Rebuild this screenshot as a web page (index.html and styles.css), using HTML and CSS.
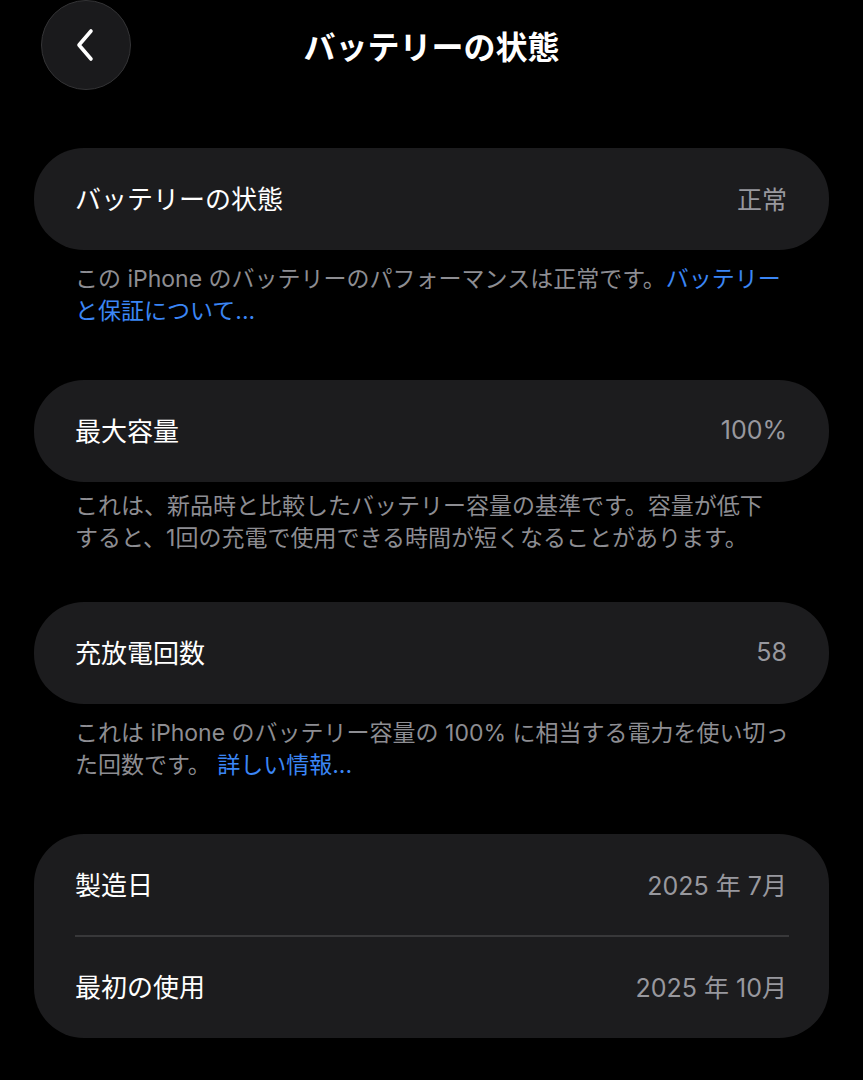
FILE: index.html
```html
<!DOCTYPE html>
<html lang="ja">
<head>
    <meta charset="utf-8">
    <title>バッテリーの状態</title>
    <link rel="stylesheet" href="styles.css">
</head>
<body>
    <header class="topbar">
        <button class="back-btn" aria-label="戻る">
            <svg width="28" height="36" viewBox="0 0 28 36">
                <path d="M19 4 L7 18 L19 32" fill="none" stroke="#fff" stroke-width="3.6" stroke-linecap="round" stroke-linejoin="round"/>
            </svg>
        </button>
        <h1 class="title">バッテリーの状態</h1>
        <span></span>
    </header>

    <section class="group">
        <div class="card">
            <div class="row">
                <span class="label">バッテリーの状態</span>
                <span class="value">正常</span>
            </div>
        </div>
        <p class="note">この iPhone のバッテリーのパフォーマンスは正常です。<a href="#">バッテリー<br>と保証について...</a></p>
    </section>

    <section class="group">
        <div class="card">
            <div class="row">
                <span class="label">最大容量</span>
                <span class="value">100%</span>
            </div>
        </div>
        <p class="note tight">これは、新品時と比較したバッテリー容量の基準です。容量が低下<br>すると、1回の充電で使用できる時間が短くなることがあります。</p>
    </section>

    <section class="group after-tight">
        <div class="card">
            <div class="row">
                <span class="label">充放電回数</span>
                <span class="value">58</span>
            </div>
        </div>
        <p class="note">これは iPhone のバッテリー容量の 100% に相当する電力を使い切っ<br>た回数です。 <a href="#">詳しい情報...</a></p>
    </section>

    <section class="group">
        <div class="card">
            <div class="row">
                <span class="label">製造日</span>
                <span class="value">2025 年 7月</span>
            </div>
            <div class="divider"></div>
            <div class="row">
                <span class="label">最初の使用</span>
                <span class="value">2025 年 10月</span>
            </div>
        </div>
    </section>
</body>
</html>
```

FILE: styles.css
```css
body {
    margin: 0;
    padding: 0 34px;
    background: #000;
    color: #fff;
    font-family: Inter, "Noto Sans CJK JP", sans-serif;
}

.topbar {
    display: grid;
    grid-template-columns: 1fr auto 1fr;
    align-items: center;
    height: 90px;
}

.back-btn {
    width: 90px;
    height: 90px;
    margin-left: 7px;
    border-radius: 50%;
    border: 1px solid #343436;
    background: #1a1a1c;
    display: flex;
    align-items: center;
    justify-content: center;
    padding: 0;
    cursor: pointer;
}

.title {
    margin: 0;
    font-size: 32px;
    font-weight: 700;
}

.group {
    margin-top: 58px;
}

.group + .group {
    margin-top: 53px;
}

.group.after-tight {
    margin-top: 48px;
}

.card {
    background: #1c1c1e;
    border-radius: 50px;
}

.row {
    display: flex;
    justify-content: space-between;
    align-items: center;
    height: 102px;
    padding: 0 42px 0 41px;
}

.label {
    font-size: 26px;
    margin-top: -3px;
}

.value {
    font-size: 25px;
    color: #98989e;
    margin-top: -3px;
}

.divider {
    height: 2px;
    margin: -1px 40px -1px 41px;
    background: #38383a;
}

.note {
    margin: 13px 0 0;
    padding: 0 0 0 41px;
    font-size: 23px;
    line-height: 32px;
    white-space: nowrap;
    color: #8d8d92;
}

.note.tight {
    margin-top: 8px;
}

.note a {
    color: #3b86f5;
    text-decoration: none;
}
```
